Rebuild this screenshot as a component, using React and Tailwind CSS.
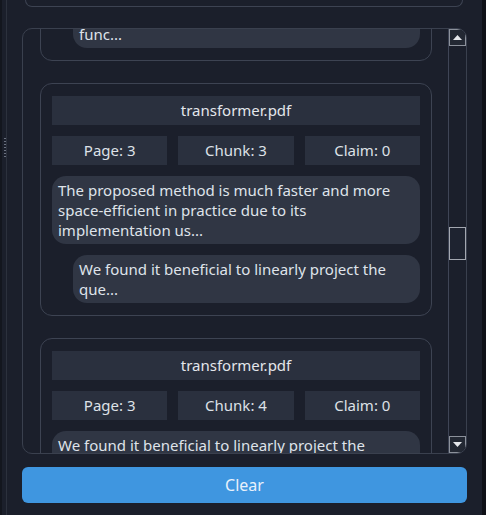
import React from "react";

const font = { fontFamily: '"Noto Sans", "Open Sans", sans-serif' };

function Bubble({ indent, lines }) {
  return (
    <div
      className={
        indent
          ? "ml-[21px] rounded-[14px] bg-[#303644] px-[6px] py-[4px] text-[15px] leading-[20px] text-[#dfe3ea]"
          : "rounded-[14px] bg-[#303644] px-[6px] py-[4px] text-[15px] leading-[20px] text-[#dfe3ea]"
      }
    >
      {lines.map((l, i) => (
        <div key={i} className="whitespace-nowrap">
          {l}
        </div>
      ))}
    </div>
  );
}

function Meta({ page, chunk, claim }) {
  return (
    <>
      <div className="flex h-[29px] items-center justify-center bg-[#2a303e] text-[15px] text-[#e3e6eb]">
        transformer.pdf
      </div>
      <div className="grid grid-cols-3 gap-[11px]">
        <div className="flex h-[29px] items-center justify-center bg-[#2a303e] text-[15px] text-[#dde1e7]">
          Page: {page}
        </div>
        <div className="flex h-[29px] items-center justify-center bg-[#2a303e] text-[15px] text-[#dde1e7]">
          Chunk: {chunk}
        </div>
        <div className="flex h-[29px] items-center justify-center bg-[#2a303e] text-[15px] text-[#dde1e7]">
          Claim: {claim}
        </div>
      </div>
    </>
  );
}

function Card({ children }) {
  return (
    <div className="flex w-[392px] shrink-0 flex-col gap-[11px] rounded-[12px] border border-[#3d4352] px-[11px] pt-[12px] pb-[12px]">
      {children}
    </div>
  );
}

function Arrow({ up }) {
  return (
    <div className="flex h-[17px] w-[17px] items-center justify-center border border-[#8c919b] bg-[#232833]">
      <svg width="9" height="5" viewBox="0 0 9 5">
        {up ? (
          <polygon points="0,5 4.5,0 9,5" fill="#e6e8ec" />
        ) : (
          <polygon points="0,0 4.5,5 9,0" fill="#e6e8ec" />
        )}
      </svg>
    </div>
  );
}

export default function App() {
  return (
    <div className="flex h-[515px] w-[486px] overflow-hidden bg-[#1b1f2b]" style={font}>
      {/* splitter */}
      <div className="flex w-[8px] shrink-0">
        <div className="w-[2px] bg-[#13161e]" />
        <div className="w-[2px]" />
        <div className="flex w-[2px] flex-col gap-[2px] pt-[138px]">
          {[0, 1, 2, 3, 4, 5, 6].map((i) => (
            <div key={i} className="h-[1px] w-[2px] bg-[#6b7180]" />
          ))}
        </div>
        <div className="w-[1px] bg-[#2c313d]" />
        <div className="w-[1px]" />
      </div>

      <div className="flex flex-1 flex-col pl-[14px] pr-[15px]">
        <div className="ml-[3px] mr-[4px] h-[7px] shrink-0 rounded-b-[8px] border-x border-b border-[#3d4352]" />

        <div className="mt-[21px] flex h-[426px] shrink-0 overflow-hidden rounded-[10px] border border-[#3a404e]">
          <div className="flex flex-1 flex-col gap-[22px] overflow-hidden pl-[17px]">
            <div className="-mt-[42px]">
              <Card>
                <Bubble indent lines={["and softmax function to convert the decoder output to", "func..."]} />
              </Card>
            </div>
            <Card>
              <Meta page={3} chunk={3} claim={0} />
              <Bubble
                lines={[
                  "The proposed method is much faster and more",
                  "space-efficient in practice due to its",
                  "implementation us...",
                ]}
              />
              <Bubble indent lines={["We found it beneficial to linearly project the", "que..."]} />
            </Card>
            <Card>
              <Meta page={3} chunk={4} claim={0} />
              <Bubble lines={["We found it beneficial to linearly project the", "queries, keys and values h times with different..."]} />
            </Card>
          </div>

          {/* scrollbar */}
          <div className="flex w-[18px] shrink-0 flex-col border-l border-[#3f4556]">
            <Arrow up />
            <div className="flex-1">
              <div className="mt-[181px] h-[33px] w-[17px] border border-[#a3a7b0] bg-[#1e2330]" />
            </div>
            <Arrow />
          </div>
        </div>

        <button className="mt-[13px] flex h-[36px] shrink-0 items-center justify-center rounded-[6px] bg-[#3f96e0] text-[16px] text-[#e8f1fb]">
          Clear
        </button>
      </div>

      <div className="w-[4px] shrink-0 bg-[#0f1117]" />
    </div>
  );
}
